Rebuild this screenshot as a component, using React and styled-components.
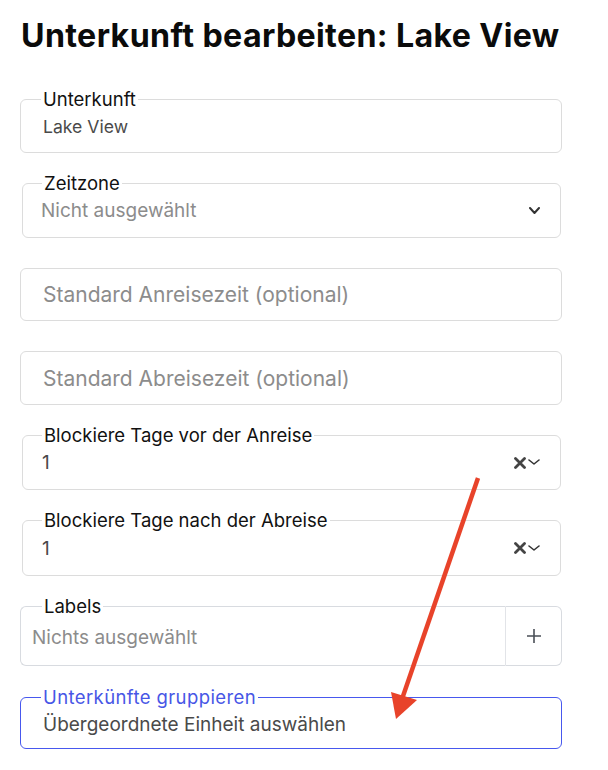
import React from "react"
import styled, { createGlobalStyle } from "styled-components"

const Global = createGlobalStyle`
  body {
    margin: 0;
    background: #fff;
    font-family: Inter, "Noto Sans", sans-serif;
    color: #111;
  }
`

const Page = styled.div`
  position: relative;
  width: 608px;
  height: 770px;
  padding: 16px 0 0 20px;
  box-sizing: border-box;
  overflow: hidden;
`

const Title = styled.h1`
  margin: 0 0 0 1px;
  font-size: 32.2px;
  line-height: 40px;
  font-weight: 700;
  letter-spacing: 0.35px;
  color: #0b0b0b;
`

const Field = styled.div`
  position: relative;
  box-sizing: border-box;
  margin-top: ${({ $mt }) => $mt}px;
  margin-left: ${({ $inset }) => ($inset ? 2 : 0)}px;
  width: ${({ $inset }) => ($inset ? 539 : 542)}px;
  height: ${({ $h }) => $h}px;
  border: 1px solid ${({ $active }) => ($active ? "#4758ee" : "#dcdcdc")};
  border-radius: 6px;
  display: flex;
  align-items: center;
  padding: 0 18px 0 ${({ $pl }) => $pl}px;
`

const Label = styled.span`
  position: absolute;
  top: -10px;
  left: ${({ $left }) => $left}px;
  padding: 0 2px;
  background: #fff;
  font-size: 18.5px;
  line-height: 18px;
  letter-spacing: ${({ $active }) => ($active ? 0.4 : 0)}px;
  color: ${({ $active }) => ($active ? "#4756e6" : "#111")};
`

const Value = styled.span`
  flex: 1;
  font-size: ${({ $size }) => $size}px;
  padding-top: ${({ $pt }) => $pt || 0}px;
  color: ${({ $placeholder }) => ($placeholder ? "#8c8c8c" : "#4a4a4a")};
  white-space: nowrap;
`

const Icons = styled.div`
  display: flex;
  align-items: center;
  gap: 2px;
  margin-right: 2px;
`

const Group = styled.div`
  display: flex;
  margin-top: ${({ $mt }) => $mt}px;
  width: 542px;
  height: 60px;
`

const GroupInput = styled.div`
  position: relative;
  box-sizing: border-box;
  flex: 1;
  border: 1px solid #d8dbe0;
  border-right: 1px solid #e2e4e8;
  border-radius: 6px 0 0 6px;
  display: flex;
  align-items: center;
  padding: 3px 0 0 11px;
`

const AddButton = styled.button`
  width: 56px;
  border: 1px solid #d8dbe0;
  border-left: none;
  border-radius: 0 6px 6px 0;
  background: #fff;
  display: flex;
  align-items: center;
  justify-content: center;
  padding: 0;
  color: #4a4f57;
`

const Arrow = styled.svg`
  position: absolute;
  left: 0;
  top: 0;
  pointer-events: none;
`

const Chevron = ({ w = 11, h = 6, sw = 2 }) => (
  <svg width={w} height={h + 2} viewBox={`0 0 ${w} ${h + 2}`} fill="none">
    <path
      d={`M1 1 L${w / 2} ${h} L${w - 1} 1`}
      stroke="#333"
      strokeWidth={sw}
      strokeLinecap="round"
      strokeLinejoin="round"
    />
  </svg>
)

const Clear = () => (
  <svg width="12" height="12" viewBox="0 0 12 12" fill="none">
    <path d="M1.5 1.5 L10.5 10.5 M10.5 1.5 L1.5 10.5" stroke="#444" strokeWidth="2.8" strokeLinecap="round" />
  </svg>
)

const Plus = () => (
  <svg width="16" height="16" viewBox="0 0 16 16" fill="none">
    <path d="M8 1 V15 M1 8 H15" stroke="#4a4f57" strokeWidth="1.6" />
  </svg>
)

const blockFields = [
  { label: "Blockiere Tage vor der Anreise", h: 55 },
  { label: "Blockiere Tage nach der Abreise", h: 56 },
]

export default function App() {
  return (
    <Page>
      <Global />
      <Title>Unterkunft bearbeiten: Lake View</Title>

      <Field $mt={43} $h={54} $pl={22}>
        <Label $left={20}>Unterkunft</Label>
        <Value $size={17.6} $pt={1}>Lake View</Value>
      </Field>

      <Field $mt={30} $h={55} $pl={18} $inset>
        <Label $left={19}>Zeitzone</Label>
        <Value $size={19} $placeholder>Nicht ausgewählt</Value>
        <Icons>
          <Chevron />
        </Icons>
      </Field>

      <Field $mt={30} $h={53} $pl={22}>
        <Value $size={21} $placeholder>Standard Anreisezeit (optional)</Value>
      </Field>

      <Field $mt={30} $h={54} $pl={22}>
        <Value $size={21} $placeholder>Standard Abreisezeit (optional)</Value>
      </Field>

      {blockFields.map((f) => (
        <Field key={f.label} $mt={30} $h={f.h} $pl={19} $inset>
          <Label $left={19}>{f.label}</Label>
          <Value $size={19}>1</Value>
          <Icons>
            <Clear />
            <Chevron w={12} h={5} sw={1.6} />
          </Icons>
        </Field>
      ))}

      <Group $mt={30}>
        <GroupInput>
          <Label $left={21}>Labels</Label>
          <Value $size={19} $placeholder>Nichts ausgewählt</Value>
        </GroupInput>
        <AddButton aria-label="Label hinzufügen">
          <Plus />
        </AddButton>
      </Group>

      <Field $mt={31} $h={52} $pl={22} $active>
        <Label $left={20} $active>Unterkünfte gruppieren</Label>
        <Value $size={19} $pt={2}>Übergeordnete Einheit auswählen</Value>
      </Field>

      <Arrow width="608" height="770" viewBox="0 0 608 770">
        <line x1="478" y1="478" x2="401" y2="702" stroke="#e8432a" strokeWidth="4.5" />
        <polygon points="391,692 417,700 396,719" fill="#e8432a" />
      </Arrow>
    </Page>
  )
}
